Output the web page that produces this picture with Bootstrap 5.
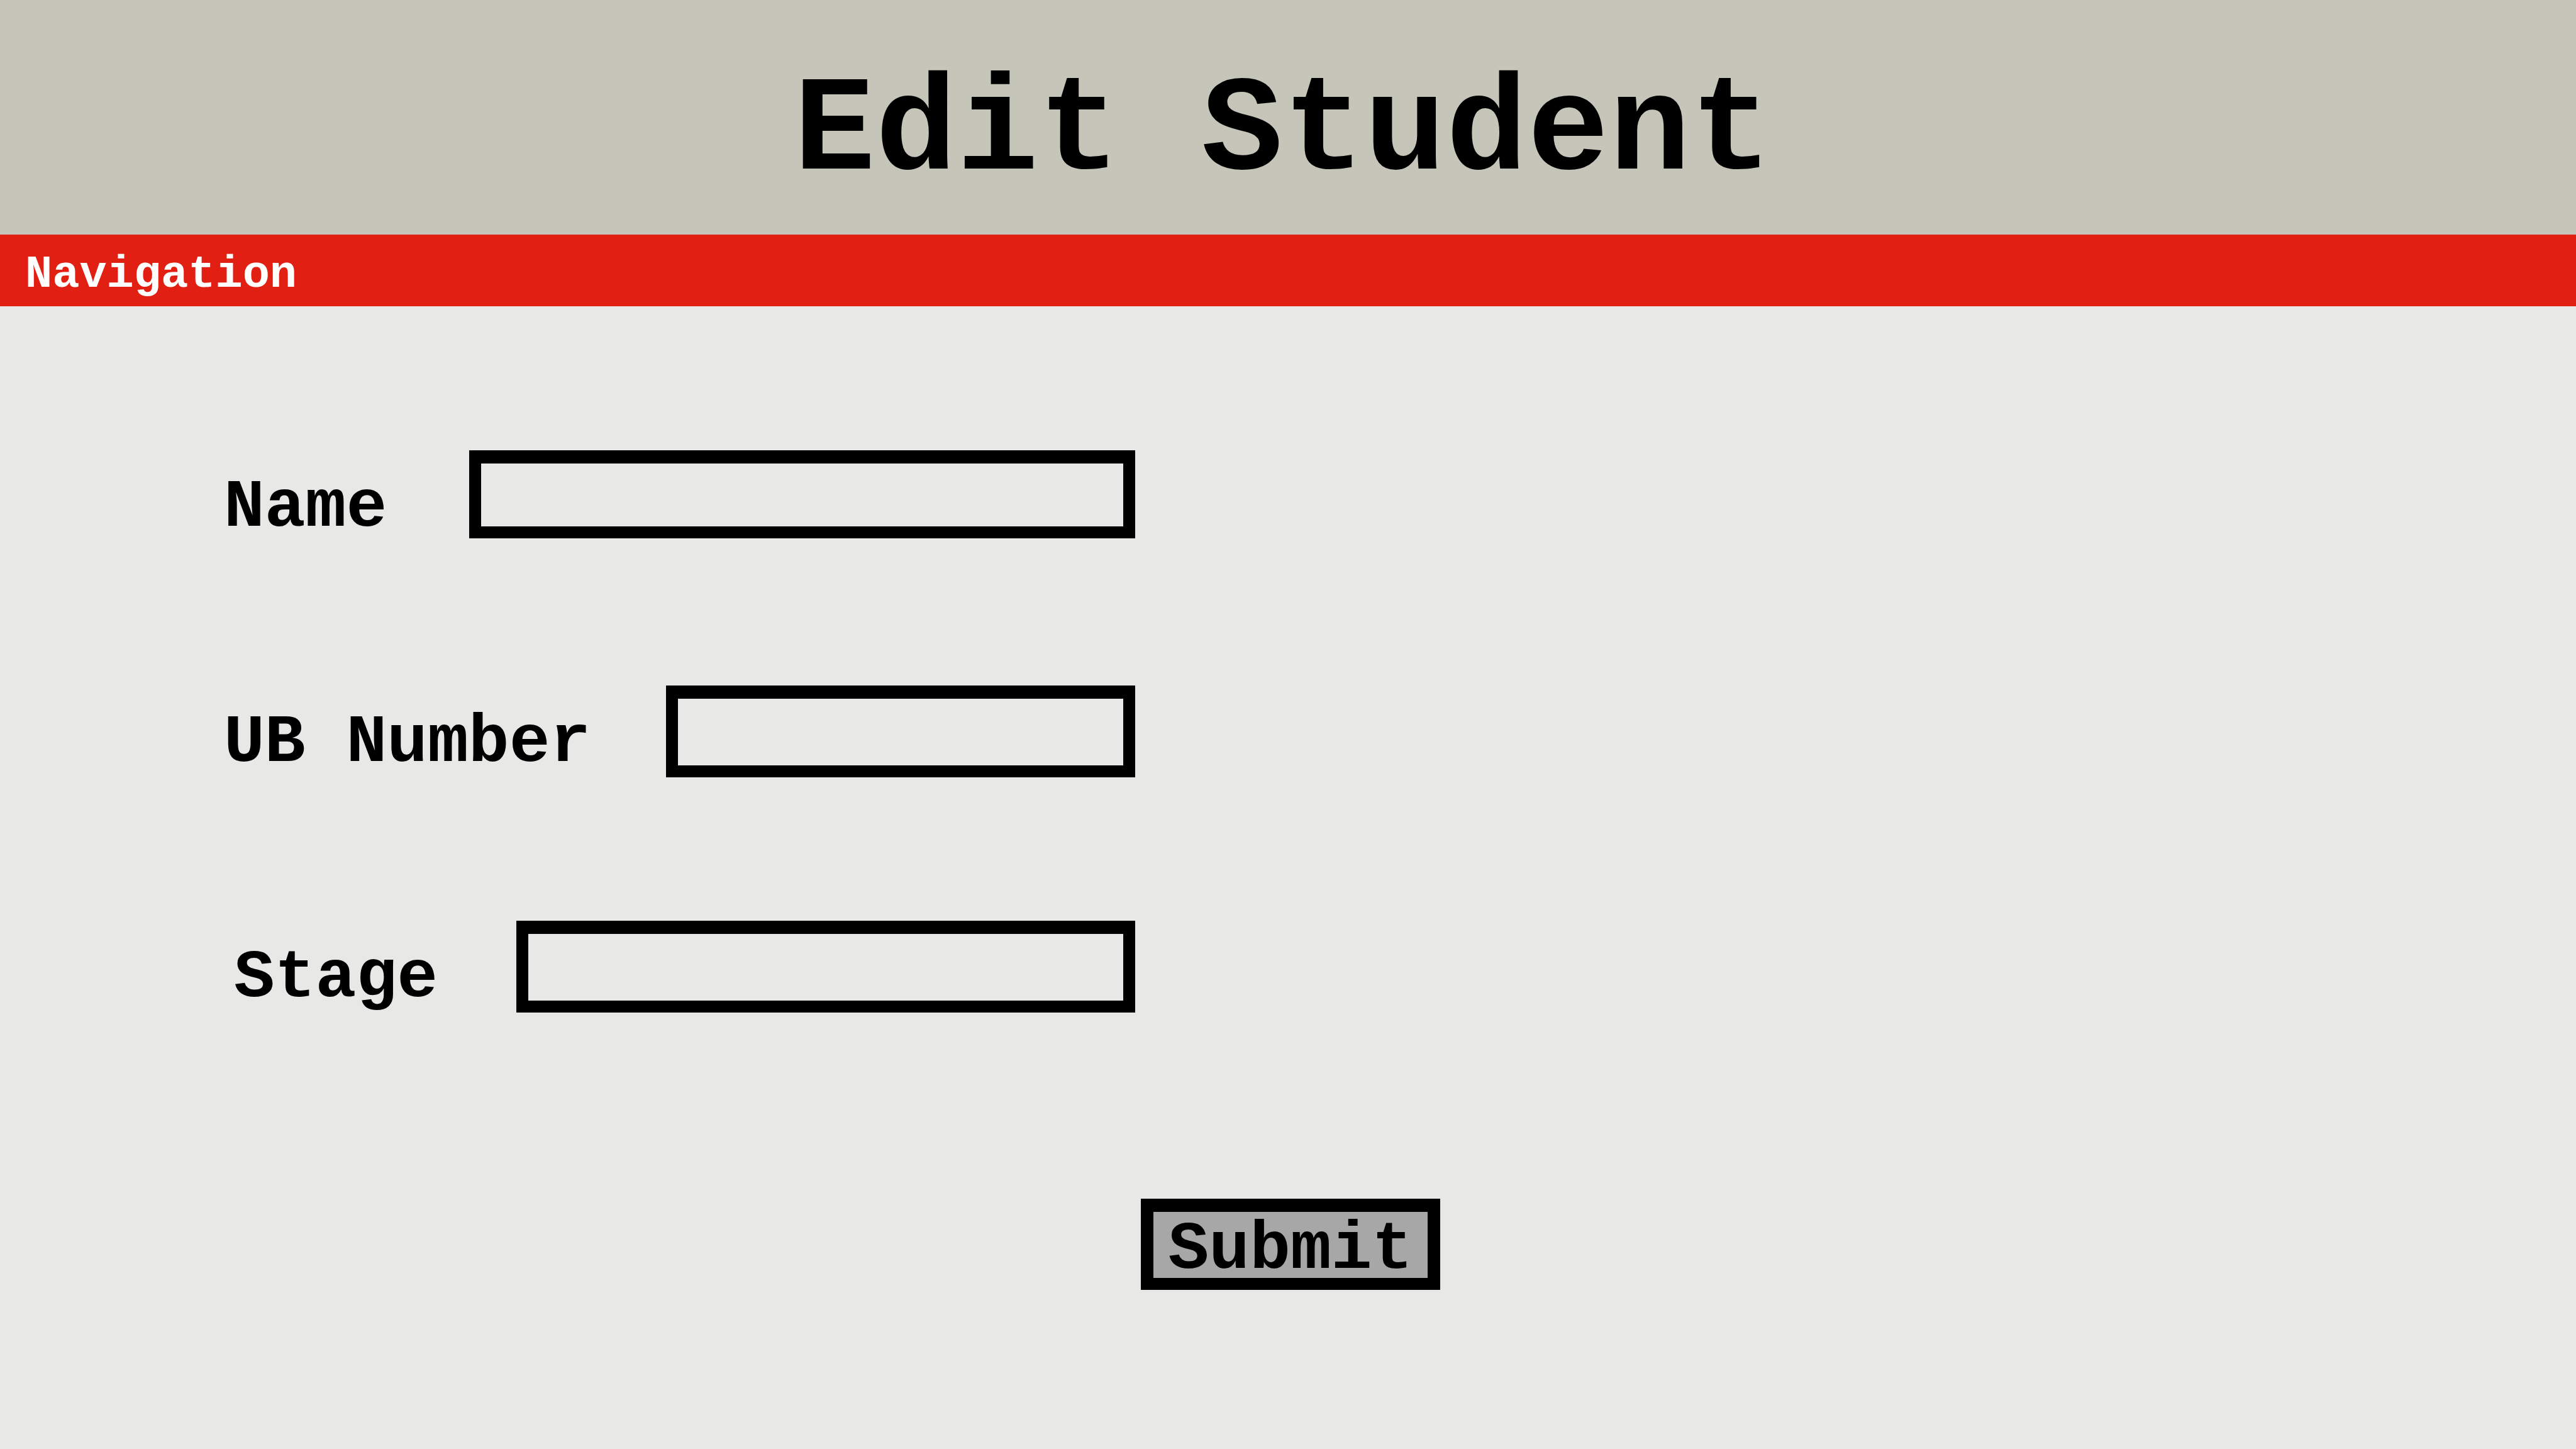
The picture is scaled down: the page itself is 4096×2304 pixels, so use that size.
<!DOCTYPE html>
<html lang="en">
<head>
<meta charset="utf-8">
<meta name="viewport" content="width=device-width, initial-scale=1">
<title>Edit Student</title>
<link href="https://cdn.jsdelivr.net/npm/bootstrap@5.3.0/dist/css/bootstrap.min.css" rel="stylesheet">
<style>
  body { background: #e8e8e6; color: #000; font-family: "Courier New", "Liberation Mono", monospace; font-weight: 700; }
  .page-head { background: #c6c5b9; padding: 103px 16px 54px 0; }
  .page-title { font-size: 216px; line-height: 216px; font-weight: 700; }
  .site-nav { background: #e12013; padding: 28px 40px 14px; }
  .site-nav .navbar-brand { color: #fff; font-size: 72px; line-height: 72px; }
  .student-form { padding-top: 229px; }
  .fields { max-width: 1805px; padding-left: 356px; gap: 227px; }
  .field-row { min-height: 147px; }
  .field-label { font-size: 108px; line-height: 108px; padding-top: 37px; }
  .label-inset { padding-left: 16px; }
  .field-box { border: 20px solid #000; border-width: 21px 19px 19px; border-radius: 0; background: transparent; color: #000;
    font-size: 72px; line-height: 72px; padding: 0 16px; height: 146px; min-width: 0; }
  .field-box:focus { background: transparent; border-color: #000; }
  .box-name { width: 1059px; height: 140px; }
  .box-number { width: 746px; }
  .box-stage { width: 984px; }
  .submit-row { margin-top: 295px; }
  .btn-submit { background: #a7a7a7; color: #000; border: 20px solid #000; border-width: 21px 20px 19px; border-radius: 0;
    font-size: 108px; line-height: 108px; font-weight: 700; padding: 6px 24px 0; height: 145px; }
  .btn-submit:hover { background: #999; color: #000; border-color: #000; }
</style>
</head>
<body class="min-vh-100">
<header class="page-head">
  <h1 class="page-title text-center m-0">Edit Student</h1>
</header>
<nav class="navbar site-nav" aria-label="Main">
  <a class="navbar-brand p-0 m-0" href="#">Navigation</a>
</nav>
<main>
  <form class="student-form">
    <div class="fields d-flex flex-column">
      <div class="field-row d-flex justify-content-between align-items-start">
        <label class="field-label" for="name">Name</label>
        <input class="form-control field-box box-name" type="text" id="name">
      </div>
      <div class="field-row d-flex justify-content-between align-items-start">
        <label class="field-label text-nowrap" for="number">UB Number</label>
        <input class="form-control field-box box-number" type="text" id="number">
      </div>
      <div class="field-row d-flex justify-content-between align-items-start">
        <label class="field-label label-inset" for="stage">Stage</label>
        <input class="form-control field-box box-stage" type="text" id="stage">
      </div>
    </div>
    <div class="submit-row d-flex justify-content-center ps-2">
      <button class="btn btn-submit" type="submit">Submit</button>
    </div>
  </form>
</main>
<script src="https://cdn.jsdelivr.net/npm/bootstrap@5.3.0/dist/js/bootstrap.bundle.min.js"></script>
</body>
</html>
